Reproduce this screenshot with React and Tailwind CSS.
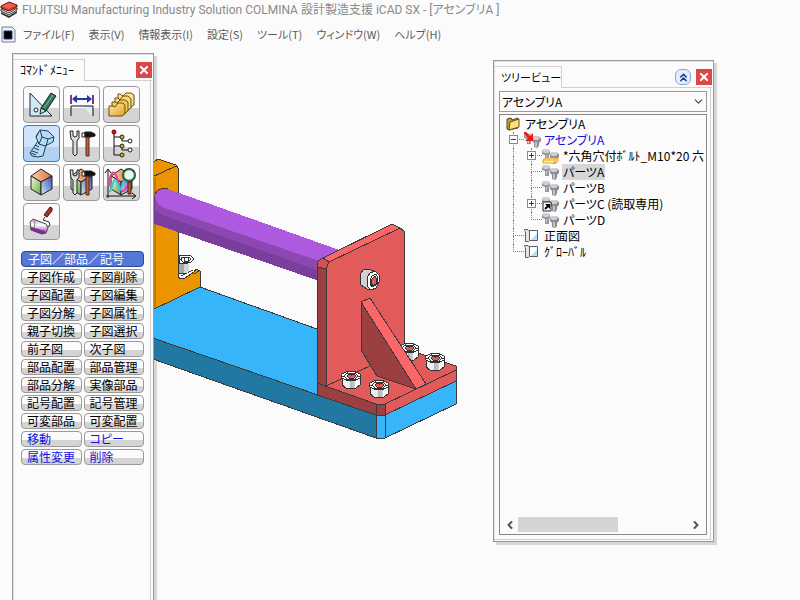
import { useState } from 'react';
import { ChevronDown, ChevronLeft, ChevronRight, ChevronsUp } from 'lucide-react';

const menus = ['ファイル(F)', '表示(V)', '情報表示(I)', '設定(S)', 'ツール(T)', 'ウィンドウ(W)', 'ヘルプ(H)'];

// half-width katakana labels
const COMMAND_MENU = '\uFF7A\uFF8F\uFF9D\uFF84\uFF9E\uFF92\uFF86\uFF6D\uFF70';
const BOLT = '\uFF8E\uFF9E\uFF99\uFF84';
const GLOBAL = '\uFF78\uFF9E\uFF9B\uFF70\uFF8A\uFF9E\uFF99';

const commands = [
  '子図作成', '子図削除',
  '子図配置', '子図編集',
  '子図分解', '子図属性',
  '親子切換', '子図選択',
  '前子図', '次子図',
  '部品配置', '部品管理',
  '部品分解', '実像部品',
  '記号配置', '記号管理',
  '可変部品', '可変配置',
];

const editCommands = ['移動', 'コピー', '属性変更', '削除'];

/* ---------- toolbar icons ---------- */

function Cube() {
  return (
    <g stroke="#222" strokeWidth="1">
      <path d="M18 5 29 12 18 18 8 12Z" fill="url(#cubeTop)" />
      <path d="M8 12 18 18V31L8 25Z" fill="url(#cubeLeft)" />
      <path d="M29 12 18 18V31L29 25Z" fill="url(#cubeRight)" />
    </g>
  );
}

function Tools() {
  return (
    <g stroke="#222" strokeWidth="1">
      <path d="M7 6 8 14 10 16V29L12 31 14 29V16L16 13V6L14 6V11L12 12 10 11V6Z" fill="#ddd" />
      <path d="M23 12H26V31H23Z" fill="#b8623a" stroke="#5a2a1a" />
      <path d="M19 8H22V12H19Z" fill="#fff" />
      <path d="M22 7H28L32 9V11L28 12H22Z" fill="#111" />
    </g>
  );
}

const icons = {
  draft: (
    <>
      <path d="M7 7V30H29Z" fill="#cfeaf5" stroke="#223" />
      <circle cx="13" cy="24" r="2" fill="#fff" stroke="#223" />
      <path d="M18 22 28 7 33 10 23 25Z" fill="#2f7d55" stroke="#123" />
      <path d="M18 22 23 25 17 28Z" fill="#e8d9b0" stroke="#123" />
      <path d="M21 22 30 9" stroke="#7fc49c" />
    </>
  ),
  dimension: (
    <>
      <path d="M20 20H29V30Z" fill="#d5f0fa" />
      <path d="M8 9V18M30 9V18" stroke="#7a3a8c" strokeWidth="2" />
      <path d="M10 13H28" stroke="#2a36a8" strokeWidth="2" />
      <path d="M9 13 14 9V17ZM29 13 24 9V17Z" fill="#2a36a8" />
      <path d="M8 30V20H30V30" fill="none" stroke="#111" />
    </>
  ),
  folders: (
    <g stroke="#6a4a10">
      <path d="M15 8 17 8 20 10 23 7H28L31 9V19L28 21H15Z" fill="#fbe48c" />
      <path d="M12 12H15L17 14 20 10H25L28 13V22L25 24H12Z" fill="#f9dc76" />
      <path d="M9 16H12L14 17 17 14H22L25 16V25L22 27H9Z" fill="#f5cf5c" />
      <path d="M6 20H10L12 21 15 17H20L22 19V28L19 30H6Z" fill="url(#gold)" />
    </g>
  ),
  bolt: (
    <g fill="#b9daf3" stroke="#16405f" strokeWidth="1">
      <path d="M15 16 7 28 9 31 15 32 20 31 23 20Z" />
      <path d="M13 12 17 5 25 6 31 12 30 17 22 21 16 19Z" />
      <path d="M17 5 19 12 25 14 31 12M19 12 16 19M25 14 23 21M13 12 15 8" fill="none" />
      <path d="M12 20 16 22M11 23 16 25M9 26 15 28M8 28 13 30" fill="none" />
    </g>
  ),
  tools: <Tools />,
  tree: (
    <>
      <path d="M11 8V30H18M11 12H18M11 21H18M19 12V16H26M19 21V25H26" fill="none" stroke="#111" />
      <circle cx="11" cy="7" r="2" fill="#e01010" stroke="#700" />
      <g fill="#d9b800" stroke="#222">
        <circle cx="19" cy="12" r="2" />
        <circle cx="19" cy="21" r="2" />
        <circle cx="19" cy="30" r="2" />
      </g>
      <g fill="#fff" stroke="#222">
        <circle cx="27" cy="16" r="2" />
        <circle cx="27" cy="25" r="2" />
      </g>
    </>
  ),
  cube: <Cube />,
  cubeTools: (
    <>
      <Cube />
      <Tools />
    </>
  ),
  analyze: (
    <>
      <Cube />
      <path d="M5 34V6M2 9 5 5 8 9M3 32H32M29 29 33 32 29 35" fill="none" stroke="#111" />
      <path d="M6 22C7 5 12 5 15 17S20 30 24 22" fill="none" stroke="#e6429a" strokeWidth="2" />
      <path d="M6 27C9 29 9 16 12 16S16 29 18 25 20 14 23 18" fill="none" stroke="#38c7e0" strokeWidth="2" />
      <path d="M25 18H28V30H25Z" fill="#b8623a" stroke="#4a1a10" />
      <circle cx="26" cy="11" r="6" fill="#e9f8ee" stroke="#1f4e35" strokeWidth="2" />
      <circle cx="26" cy="11" r="5" fill="none" stroke="#80b090" />
    </>
  ),
  roller: (
    <>
      <path d="M27 4 29 5 29 8 24 14 21 12Z" fill="#a3372c" stroke="#4c120c" />
      <path d="M22 14 20 17 26 19 27 22 24 25" fill="none" stroke="#333" />
      <path d="M7 19 10 16 23 21 25 25 23 30 19 31 8 27Z" fill="url(#roll)" stroke="#544" />
      <path d="M8 24 22 28 22 31H18L8 27Z" fill="#7b2d93" />
      <path d="M10 16 12 20 11 25" fill="none" stroke="#877" />
    </>
  ),
};

const tiles = [
  { id: 'draft', label: '作図' },
  { id: 'dimension', label: '寸法' },
  { id: 'folders', label: 'ファイル' },
  { id: 'bolt', label: '部品' },
  { id: 'tools', label: 'ツール' },
  { id: 'tree', label: '構成' },
  { id: 'cube', label: '3D' },
  { id: 'cubeTools', label: '3Dツール' },
  { id: 'analyze', label: '解析' },
  { id: 'roller', label: '表示' },
];

function IconDefs() {
  return (
    <svg className="absolute size-0" aria-hidden="true">
      <defs>
        <linearGradient id="cubeTop" x1="0" x2="1">
          <stop offset="0" stopColor="#fbd0b0" />
          <stop offset="1" stopColor="#d9703a" />
        </linearGradient>
        <linearGradient id="cubeLeft" x1="0" x2="1" y1="0" y2="1">
          <stop offset="0" stopColor="#f4fbe8" />
          <stop offset="1" stopColor="#5fae35" />
        </linearGradient>
        <linearGradient id="cubeRight" x1="0" x2="1" y1="1" y2="0">
          <stop offset="0" stopColor="#d5e8ff" />
          <stop offset="1" stopColor="#3a4fae" />
        </linearGradient>
        <linearGradient id="gold" x1="0" x2="1" y1="0" y2="1">
          <stop offset="0" stopColor="#fff0a8" />
          <stop offset="1" stopColor="#e0a020" />
        </linearGradient>
        <linearGradient id="roll" x1="0" x2="0" y1="0" y2="1">
          <stop offset="0" stopColor="#b9a6c4" />
          <stop offset="0.4" stopColor="#fff" />
          <stop offset="1" stopColor="#7b2d93" />
        </linearGradient>
        <linearGradient id="steel" x1="0" x2="1">
          <stop offset="0.45" stopColor="#ececec" />
          <stop offset="0.45" stopColor="#b4b4b4" />
          <stop offset="0.7" stopColor="#cccccc" />
          <stop offset="0.7" stopColor="#fafafa" />
        </linearGradient>
      </defs>
    </svg>
  );
}

/* ---------- 3D model ---------- */

function Screw({ x, y, socket = '#e25b5b' }) {
  return (
    <g transform={`translate(${x} ${y})`} stroke="#333">
      <path d="M-9 -4V5L-5 8 0 9 5 8 9 5V-4Z" fill="url(#steel)" />
      <path d="M-10 -4-9 -6-5 -8 0 -9 5 -8 9 -6 10 -4 9 -2 5 0 0 1-5 0-9 -2Z" fill="#fff" />
      <path d="M-7 -4-4 -7H4L7 -4 4 -1H-4Z" fill="#f0f0f0" />
      <path d="M-4 -4-2 -6H3L5 -4 3 -2H-2Z" fill={socket} />
      <path d="M-9 -4H-7M7 -4H9M-4 -8V-7M4 -8V-7M-4 -1-5 0M4 -1 5 0M0 -6V-4" />
    </g>
  );
}

function Model() {
  return (
    <svg
      className="absolute top-0 left-[154px] h-[550px] w-[326px]"
      viewBox="154 50 326 550"
      shapeRendering="crispEdges"
      strokeWidth="1"
      strokeLinejoin="round"
      role="img"
      aria-label="アセンブリA"
    >
      {/* base plate */}
      <g stroke="#3a3a3a">
        <path d="M150 311 200 287 317 329 456 375V380L385 415H376L150 337Z" fill="#36b5fb" />
        <path d="M150 337 376 415V438L150 358Z" fill="#2178a3" />
        <path d="M376 415H385V438L376 438Z" fill="#36b5fb" />
        <path d="M385 415 456 381V404L385 438Z" fill="#36b5fb" />
      </g>
      {/* left bracket */}
      <path
        d="M150 164 158 159 176 165 178 168V277L181 279 185 278 194 272 196 269 200 271V287L150 311Z"
        fill="#ec9400"
        stroke="#3a3a3a"
      />
      <path d="M150 178 176 166M194 274 199 271M181 276 193 270" fill="none" stroke="#3a3a3a" />
      <path d="M150 177H156V307L150 310Z" fill="#c47b00" />
      {/* screw behind the bracket, cut by its edge */}
      <path d="M179 264H189V272L184 274H179Z" fill="#d4d4d4" />
      <path d="M179 264H184V274H179Z" fill="#a8a8a8" />
      <g fill="#fff" stroke="#333">
        <path d="M179 256 186 255 191 256 194 259 191 262 185 264 179 263Z" />
        <path d="M181 258 184 257H189L191 259 188 262H183L181 260Z" />
        <path d="M179 259H181M184 257V261M188 257V261M184 261H188" fill="none" />
        <path d="M179 273H186" />
      </g>
      {/* shaft */}
      <path d="M152 197 158 190 164 188 168 189 345 252V290L152 223Z" fill="#ae5ae0" />
      <path d="M154 196 158 204 165 208 345 270V290L152 223Z" fill="#8a48b0" />
      <path d="M154 210 165 216 345 280V290L152 223Z" fill="#7a3f9c" />
      <path d="M152 198 155 196V222L152 222Z" fill="#743892" />
      <path d="M154 195 158 190 164 188 168 189" fill="none" stroke="#3a3a3a" />
      {/* red bracket */}
      <g stroke="#3a3a3a">
        <path d="M317 383 404 348 456 366V370L385 404H376Z" fill="#e25b5b" />
        <path d="M317 383 376 404V415L317 395Z" fill="#9c3f40" />
        <path d="M376 404H385V415H376Z" fill="#9c3f40" />
        <path d="M385 404 456 370V381L385 415Z" fill="#e25b5b" />
        <path d="M326 269 329 262 400 228 404 231V331L405 350 326 386Z" fill="#e25b5b" />
        <path d="M323 258 392 224 400 228 329 262Z" fill="#fb6668" />
        <path d="M317 267 318 261 323 258 329 262 326 269Z" fill="#cf5353" />
        <path d="M317 267 326 269V386L317 383Z" fill="#9c3f40" />
      </g>
      <path d="M371 366 405 350V357L380 374Z" fill="#e25b5b" />
      <Screw x={409} y={352} />
      <Screw x={435} y={362} />
      <g stroke="#3a3a3a">
        <path d="M361 302V350L377 376 416 389Z" fill="#9c3f40" />
        <path d="M361 302 370 298 426 384 416 389Z" fill="#fb6668" />
      </g>
      {/* horizontal screw */}
      <g stroke="#333">
        <path d="M360 275 363 270 368 269 374 271 373 290 367 289 361 285Z" fill="#d2d2d2" />
        <path d="M367 278 370 273 375 271 379 275V282L376 288 371 290 367 286Z" fill="#fff" />
        <path d="M370 280 372 276 376 274 378 278 377 284 373 287 370 285Z" fill="#ececec" />
        <path d="M372 279 375 276 377 280 376 284 373 286 371 283Z" fill="#e25b5b" />
      </g>
      <Screw x={351} y={380} />
      <Screw x={379} y={389} />
    </svg>
  );
}

/* ---------- window parts ---------- */

function CloseButton() {
  return (
    <button type="button" aria-label="閉じる" className="flex size-4 items-center justify-center bg-[#d9494a]">
      <svg viewBox="0 0 8 8" className="size-2">
        <path d="M0 0 8 8M8 0 0 8" stroke="#fff" strokeWidth="2" />
      </svg>
    </button>
  );
}

function CommandMenu() {
  const [active, setActive] = useState('bolt');

  return (
    <section className="absolute top-[3px] bottom-0 left-3 flex w-[142px] flex-col border-x border-t border-[#999] bg-[#fbfbfb] pt-[5px] shadow-[3px_3px_0_#d6d6d6,inset_1px_1px_0_#dedede]">
      <header className="flex pl-px">
        <h2 className="h-[22px] w-[71px] border-t border-r border-[#d0d0d0] pl-[6px] text-[12px] leading-[20px] whitespace-nowrap">
          {COMMAND_MENU}
        </h2>
        <div className="mr-px flex flex-1 justify-end border-b border-[#d0d0d0] pt-[3px]">
          <CloseButton />
        </div>
      </header>
      <div className="mr-[2px] flex-1 border-r border-[#d0d0d0] pt-[5px] pl-2">
        <div className="flex flex-wrap gap-x-[3px] gap-y-[2px] pl-[2px]">
          {tiles.map(({ id, label }) => (
            <button
              key={id}
              type="button"
              aria-label={label}
              aria-pressed={id === active}
              onClick={() => setActive(id)}
              className={
                id === active
                  ? 'size-[37px] rounded-sm border border-[#2a7de0] bg-linear-to-b from-[#cfe3fa] from-60% to-[#b3d1f3] to-60%'
                  : 'size-[37px] rounded-sm border border-[#9a9a9a] bg-linear-to-b from-[#fbfbfb] from-60% to-[#d4d4d4] to-60%'
              }
            >
              <svg viewBox="1 1 35 35" className="size-full" fill="none">{icons[id]}</svg>
            </button>
          ))}
        </div>
        <h3 className="mt-[11px] mr-[6px] h-4 rounded-sm border border-[#2a4a9a] bg-[#5577d8] pl-[6px] text-[12px] leading-[14px] text-white">
          子図／部品／記号
        </h3>
        <div className="mt-[2px] mr-[6px] grid grid-cols-2 gap-[2px]">
          {commands.map((name) => (
            <button
              key={name}
              type="button"
              className="h-4 rounded-sm border border-[#9a9a9a] bg-linear-to-b from-[#fbfbfb] from-55% to-[#d4d4d4] to-55% pl-[5px] text-left text-[12px] leading-[14px] text-black"
            >
              {name}
            </button>
          ))}
          {editCommands.map((name) => (
            <button
              key={name}
              type="button"
              className="h-4 rounded-sm border border-[#9a9a9a] bg-linear-to-b from-[#fbfbfb] from-55% to-[#d4d4d4] to-55% pl-[5px] text-left text-[12px] leading-[14px] text-[#1010e0]"
            >
              {name}
            </button>
          ))}
        </div>
      </div>
    </section>
  );
}

function PartIcon({ kind }) {
  return (
    <svg viewBox="0 0 18 16" className="h-4 w-[18px] shrink-0" fill="none">
      <path d="M0 3 2 1H6L8 3V6L7 7V12H3V7L0 6Z" fill="#96969c" />
      <path d="M0 3 2 1H6L8 3 6 5H2Z" fill="#d0d0d4" />
      <path d="M4 7H5V11H4Z" fill="#c4c4c8" />
      <path d="M8 6 10 4H14L17 6V9L15 11V14L13 16 10 15V11L8 9Z" fill="#8c8c92" />
      <path d="M8 6 10 4H14L16 6 14 8H10Z" fill="#cdcdd2" />
      <path d="M11 10H13V15H11Z" fill="#c4c4c8" />
      {kind === 'assembly' && (
        <>
          <path d="M0 0 7 7" stroke="#f01818" strokeWidth="3" />
          <path d="M9 1V9H1Z" fill="#f01818" />
        </>
      )}
      {kind === 'library' && <path d="M1 12 4 10H16V13L13 15H1ZM1 12H13V15M13 12 16 10" fill="#fff0b8" stroke="#e89a10" />}
      {kind === 'link' && (
        <>
          <path d="M1 6H9V15H1Z" fill="#fff" stroke="#222" />
          <path d="M3 13 6 10" stroke="#000" strokeWidth="2" />
          <path d="M3 8H8V13Z" fill="#000" />
        </>
      )}
    </svg>
  );
}

function ViewIcon() {
  return (
    <svg viewBox="0 0 18 16" className="h-4 w-[18px] shrink-0" fill="none">
      <path d="M5 3H14V13H5Z" fill="#fff" />
      <path d="M14 4V13H6Z" fill="#b5e3f5" />
      <path d="M5 2.5H13.5V12.5H5" stroke="#556070" />
      <path d="M0.5 1.5H4L5.5 3V12.5L4.5 13.5H1.5V3.5L0.5 2.5Z" fill="#e6e6e6" stroke="#556070" />
    </svg>
  );
}

// one indent column of the dotted tree lines
function Guide({ branch, last, toggle }) {
  return (
    <span className="relative w-[18px] shrink-0 pl-[7px]">
      <span className={branch ? 'block h-2 border-b border-l border-dotted border-[#808080]' : 'block h-2 border-l border-dotted border-[#808080]'} />
      <span className={last ? 'block h-2' : 'block h-2 border-l border-dotted border-[#808080]'} />
      {toggle && (
        <button
          type="button"
          aria-label={toggle === '+' ? '展開' : '折りたたむ'}
          className="absolute top-[3px] left-[3px] flex size-[9px] items-center justify-center border border-[#8a8a8a] bg-white"
        >
          <svg viewBox="0 0 5 5" className="size-[5px] shrink-0" shapeRendering="crispEdges">
            <path d={toggle === '+' ? 'M0 2H5V3H0ZM2 0H3V5H2Z' : 'M0 2H5V3H0Z'} fill="#3c2f78" />
          </svg>
        </button>
      )}
    </span>
  );
}

const parts = [
  { name: `*六角穴付${BOLT}_M10*20 六`, kind: 'library', toggle: '+' },
  { name: 'パーツA', selected: true },
  { name: 'パーツB' },
  { name: 'パーツC (読取専用)', kind: 'link', toggle: '+' },
  { name: 'パーツD' },
];

function TreeView() {
  return (
    <section className="absolute top-[10px] left-[493px] flex h-[482px] w-[221px] flex-col border border-[#999] bg-[#fbfbfb] pt-[5px] shadow-[3px_3px_0_#d6d6d6,inset_1px_1px_0_#dedede]">
      <header className="flex pl-px">
        <h2 className="h-[22px] w-[67px] border-t border-r border-[#d0d0d0] pl-[6px] text-[11px] leading-[20px] whitespace-nowrap">
          ツリービュー
        </h2>
        <div className="mr-px flex flex-1 justify-end gap-[5px] border-b border-[#d0d0d0] pt-[3px]">
          <button type="button" aria-label="たたむ" className="flex size-4 items-center justify-center rounded-md border border-[#8aa8dd] bg-[#e3edfb] text-[#1a3f94]">
            <ChevronsUp className="size-[13px]" strokeWidth={3} />
          </button>
          <CloseButton />
        </div>
      </header>
      <div className="mr-[2px] mb-px flex min-h-0 flex-1 flex-col gap-[2px] border-r border-b border-[#d0d0d0] pt-[3px] pr-[3px] pb-[4px] pl-[5px]">
        <div className="relative">
          <select
            aria-label="アセンブリ"
            className="block h-[21px] w-full appearance-none border border-[#999] bg-[#fbfbfb] pl-[2px] text-[12px] text-black"
          >
            <option>アセンブリA</option>
          </select>
          <ChevronDown className="pointer-events-none absolute top-1 right-[2px] size-[13px] text-[#444]" strokeWidth={2} />
        </div>
        <div className="flex min-h-0 flex-1 flex-col border border-[#85878d]">
          <ul className="flex-1 overflow-hidden pt-px pl-[6px] text-[12px] leading-4 whitespace-nowrap text-black">
            <li className="flex gap-1">
              <svg viewBox="0 0 15 16" className="h-4 w-[15px] shrink-0">
                <path d="M1 3 5 2 6 4 12 2V12L3 14 1 13Z" fill="#c9a020" stroke="#444" />
                <path d="M4 6 13 3V11L3 14Z" fill="#fbe07a" stroke="#665018" />
              </svg>
              アセンブリA
            </li>
            <li className="flex">
              <Guide branch toggle="-" />
              <PartIcon kind="assembly" />
              <span className="pl-[2px] text-[#1010e0]">アセンブリA</span>
            </li>
            {parts.map((part, i) => (
              <li key={part.name} className="flex">
                <Guide />
                <Guide branch last={i === parts.length - 1} toggle={part.toggle} />
                <PartIcon kind={part.kind} />
                <span className={part.selected ? 'ml-[2px] bg-[#d6d6d6] px-px' : 'ml-[2px] px-px'}>{part.name}</span>
              </li>
            ))}
            <li className="flex">
              <Guide branch />
              <ViewIcon />
              <span className="pl-[2px]">正面図</span>
            </li>
            <li className="flex">
              <Guide branch last />
              <ViewIcon />
              <span className="pl-[2px]">{GLOBAL}</span>
            </li>
          </ul>
          <div className="flex h-[17px] items-center px-[2px] pb-[2px]">
            <button type="button" aria-label="左へ" className="flex w-4 justify-center text-[#555]">
              <ChevronLeft className="size-3" strokeWidth={4} />
            </button>
            <div className="h-[15px] flex-1">
              <div className="h-full w-[100px] bg-[#d4d4d4]" />
            </div>
            <button type="button" aria-label="右へ" className="flex w-4 justify-center text-[#555]">
              <ChevronRight className="size-3" strokeWidth={4} />
            </button>
          </div>
        </div>
      </div>
    </section>
  );
}

export default function App() {
  return (
    <div className="flex h-screen flex-col overflow-hidden bg-[#fbfbfb] font-['Noto_Sans_CJK_JP',sans-serif] text-black [font-feature-settings:'palt']">
      <IconDefs />
      <header className="flex h-5 items-center gap-1 font-['Roboto','Noto_Sans_CJK_JP',sans-serif]">
        <svg viewBox="0 0 18 18" className="size-[18px]">
          <path d="M1 11 9 15 17 10V12L9 17 1 13Z" fill="#333" />
          <path d="M1 8 9 12 17 7V9L9 14 1 10Z" fill="#f5f5f5" stroke="#333" />
          <path d="M1 5 9 1 17 4V6L9 10 1 7Z" fill="#d93a2b" stroke="#5a1a14" />
          <path d="M2 5 9 2 16 4 9 8Z" fill="#f0604a" />
        </svg>
        <h1 className="text-[12px] whitespace-nowrap text-[#8a8a8a]">
          FUJITSU Manufacturing Industry Solution COLMINA 設計製造支援 iCAD SX - [アセンブリA ]
        </h1>
      </header>
      <nav className="flex h-[28px] items-center">
        <svg viewBox="0 0 15 17" className="ml-px h-[17px] w-[15px]">
          <path d="M1 1H11L14 4V16H1Z" fill="#e9f0fa" stroke="#7a7f8a" />
          <path d="M3 5H11V13H3Z" fill="#000" stroke="#1d3f80" />
        </svg>
        <div className="flex gap-[14px] pl-[7px]">
          {menus.map((name) => (
            <button key={name} type="button" className="text-[11px] whitespace-nowrap text-[#5c5c5c]">
              {name}
            </button>
          ))}
        </div>
      </nav>
      <main className="relative mt-[2px] min-h-0 flex-1 overflow-hidden">
        <CommandMenu />
        <Model />
        <TreeView />
      </main>
    </div>
  );
}
